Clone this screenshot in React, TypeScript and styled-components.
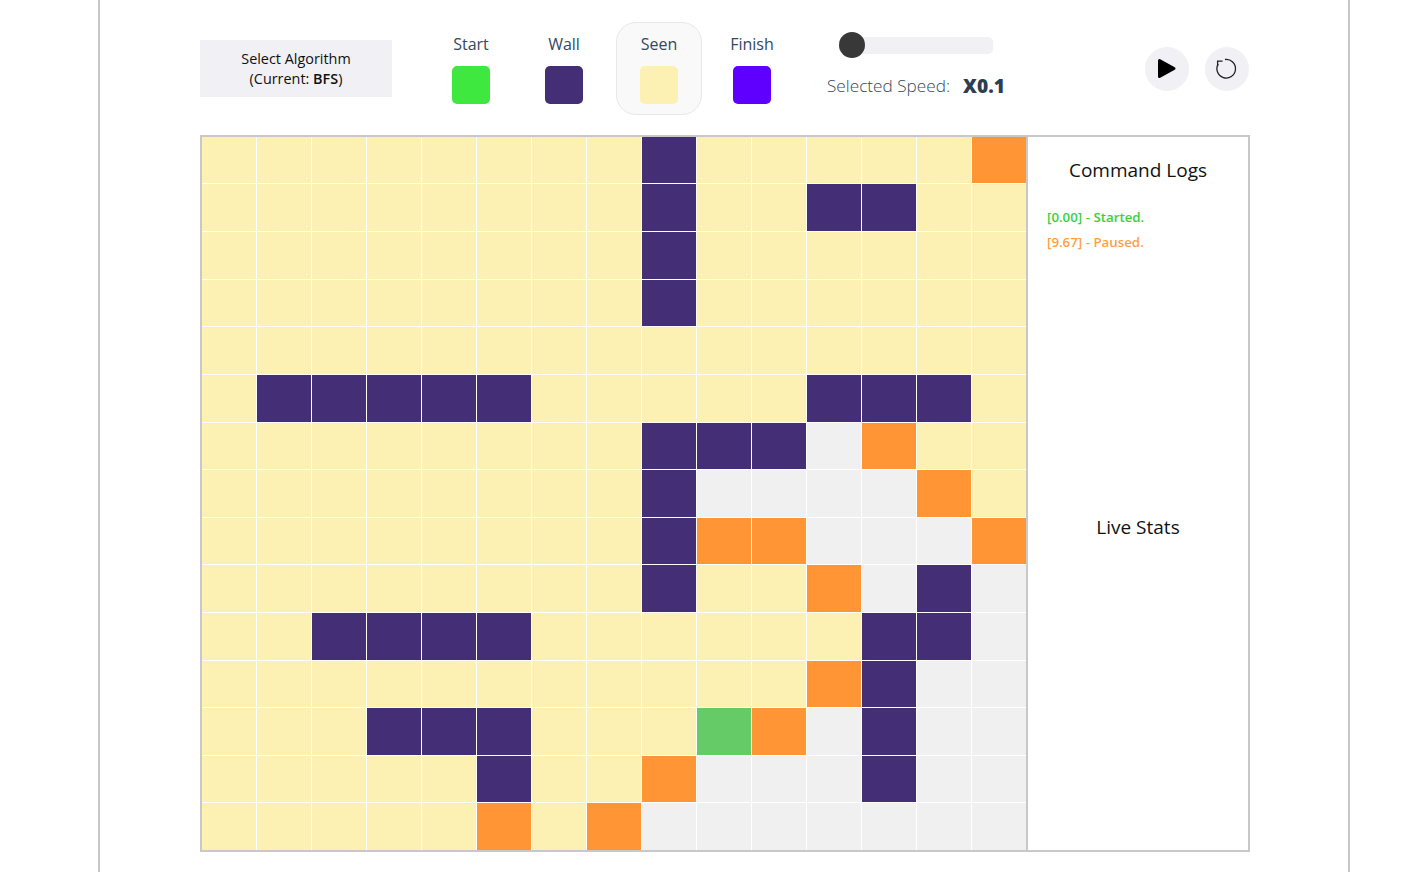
import React from 'react';
import styled, { createGlobalStyle } from 'styled-components';

const GlobalStyle = createGlobalStyle`
  html, body {
    margin: 0;
    padding: 0;
    background: #fff;
    font-family: 'Open Sans', sans-serif;
    overflow: hidden;
  }
`;

const colors = {
  start: '#3ee83e',
  wall: '#442f76',
  seen: '#fdf0b3',
  finish: '#5f00ff',
  frontier: '#ff9535',
  empty: '#f0f0f0',
  current: '#64cb66',
};

type CellKind = keyof typeof colors;

const kinds: Record<string, CellKind> = {
  Y: 'seen',
  W: 'wall',
  O: 'frontier',
  G: 'empty',
  S: 'current',
};

const board = [
  'YYYYYYYYWYYYYYO',
  'YYYYYYYYWYYWWYY',
  'YYYYYYYYWYYYYYY',
  'YYYYYYYYWYYYYYY',
  'YYYYYYYYYYYYYYY',
  'YWWWWWYYYYYWWWY',
  'YYYYYYYYWWWGOYY',
  'YYYYYYYYWGGGGOY',
  'YYYYYYYYWOOGGGO',
  'YYYYYYYYWYYOGWG',
  'YYWWWWYYYYYYWWG',
  'YYYYYYYYYYYOWGG',
  'YYYWWWYYYSOGWGG',
  'YYYYYWYYOGGGWGG',
  'YYYYYOYOGGGGGGG',
];

const legend: { label: string; color: string; active?: boolean }[] = [
  { label: 'Start', color: colors.start },
  { label: 'Wall', color: colors.wall },
  { label: 'Seen', color: colors.seen, active: true },
  { label: 'Finish', color: colors.finish },
];

const Page = styled.div`
  box-sizing: border-box;
  width: 1252px;
  height: 872px;
  margin-left: 98px;
  padding: 0 98px 0 100px;
  border-left: 2px solid #c8c8c8;
  border-right: 2px solid #c8c8c8;
`;

const Toolbar = styled.div`
  height: 135px;
  padding-top: 1px;
  box-sizing: border-box;
  display: flex;
  align-items: center;
`;

const AlgorithmButton = styled.button`
  width: 192px;
  height: 57px;
  padding: 2px 0 0;
  border: 0;
  background: #f0f0f5;
  color: #111;
  font-family: inherit;
  font-size: 14.4px;
  font-weight: 500;
  line-height: 20px;
  b {
    font-weight: 600;
  }
`;

const Legend = styled.div`
  display: flex;
  gap: 7px;
  margin-left: 36px;
`;

const LegendItem = styled.div<{ $active?: boolean }>`
  box-sizing: border-box;
  width: 86px;
  height: 93px;
  display: flex;
  flex-direction: column;
  align-items: center;
  padding-top: 10px;
  border: 1px solid ${(p) => (p.$active ? '#e8e8e8' : 'transparent')};
  border-radius: 20px;
  background: ${(p) => (p.$active ? '#f9f9f9' : 'transparent')};
  margin-left: ${(p) => (p.$active ? '2px' : '0')};
`;

const LegendLabel = styled.div`
  font-size: 16px;
  line-height: 22px;
  color: #34495e;
`;

const Swatch = styled.div<{ $color: string }>`
  width: 38.5px;
  height: 38px;
  margin-top: 11px;
  border-radius: 5px;
  background: ${(p) => p.$color};
`;

const SpeedControl = styled.div`
  width: 184px;
  margin-left: 32px;
  display: flex;
  flex-direction: column;
  margin-top: -1px;
`;

const SliderTrack = styled.div`
  position: relative;
  width: 154px;
  height: 17px;
  margin-left: 12px;
  border-radius: 5px;
  background: #f0f0f5;
`;

const SliderThumb = styled.div`
  position: absolute;
  left: 0;
  top: -5px;
  width: 26px;
  height: 26px;
  border-radius: 50%;
  background: #383838;
`;

const SpeedText = styled.div`
  margin-top: 20px;
  display: flex;
  align-items: center;
  gap: 13px;
  white-space: nowrap;
  font-size: 17.2px;
  line-height: 24px;
  font-weight: 300;
  color: #34495e;
`;

const SpeedValue = styled.span`
  font-size: 19.2px;
  font-weight: 800;
  color: #2c3e50;
`;

const Controls = styled.div`
  margin-left: auto;
  margin-right: 1px;
  margin-top: 1px;
  display: flex;
  gap: 16px;
`;

const RoundButton = styled.button`
  width: 44px;
  height: 44px;
  padding: 0;
  border: 0;
  border-radius: 50%;
  background: #f0f0f5;
  display: flex;
  align-items: center;
  justify-content: center;
`;

const Workspace = styled.div`
  box-sizing: border-box;
  width: 1050px;
  height: 717px;
  display: flex;
  border: 2px solid #c8c8c8;
`;

const Board = styled.div`
  width: 824px;
  flex: none;
  display: grid;
  grid-template-columns: repeat(15, 1fr);
  grid-template-rows: 46px 47.2px repeat(13, 1fr);
  gap: 1px;
  background: #fff;
`;

const Cell = styled.div<{ $kind: CellKind }>`
  background: ${(p) => colors[p.$kind]};
`;

const SidePanel = styled.div`
  flex: 1;
  display: flex;
  flex-direction: column;
  border-left: 2px solid #c8c8c8;
`;

const PanelSection = styled.section`
  flex: 1;
  padding: 20px 19px 0;
`;

const PanelTitle = styled.h2`
  margin: 0;
  font-size: 19px;
  line-height: 26px;
  font-weight: 400;
  text-align: center;
  color: #111;
`;

const LogList = styled.div`
  margin-top: 22px;
`;

const LogLine = styled.div<{ $color: string }>`
  font-size: 13.3px;
  line-height: 25px;
  font-weight: 600;
  color: ${(p) => p.$color};
`;

function PlayIcon() {
  return (
    <svg width="22" height="22" viewBox="0 0 22 22">
      <path
        d="M3.5 2.5 L18 10.5 L3.5 18.5 Z"
        fill="#000"
        stroke="#000"
        strokeWidth="3"
        strokeLinejoin="round"
      />
    </svg>
  );
}

function ResetIcon() {
  return (
    <svg width="24" height="24" viewBox="0 0 24 24" fill="none" stroke="#222" strokeWidth="1.3">
      <path d="M10 2.5 A9.3 9.3 0 1 1 3.2 7" />
      <path d="M7.6 4.2 L2.6 4.2 L2.6 9.2" />
    </svg>
  );
}

export default function App() {
  return (
    <>
      <GlobalStyle />
      <Page>
        <Toolbar>
          <AlgorithmButton>
            Select Algorithm
            <br />
            (Current: <b>BFS</b>)
          </AlgorithmButton>
          <Legend>
            {legend.map((item) => (
              <LegendItem key={item.label} $active={item.active}>
                <LegendLabel>{item.label}</LegendLabel>
                <Swatch $color={item.color} />
              </LegendItem>
            ))}
          </Legend>
          <SpeedControl>
            <SliderTrack>
              <SliderThumb />
            </SliderTrack>
            <SpeedText>
              Selected Speed: <SpeedValue>X0.1</SpeedValue>
            </SpeedText>
          </SpeedControl>
          <Controls>
            <RoundButton>
              <PlayIcon />
            </RoundButton>
            <RoundButton>
              <ResetIcon />
            </RoundButton>
          </Controls>
        </Toolbar>
        <Workspace>
          <Board>
            {board.flatMap((row, r) =>
              row.split('').map((c, i) => <Cell key={`${r}-${i}`} $kind={kinds[c]} />),
            )}
          </Board>
          <SidePanel>
            <PanelSection>
              <PanelTitle>Command Logs</PanelTitle>
              <LogList>
                <LogLine $color="#3ccf3c">[0.00] - Started.</LogLine>
                <LogLine $color="#ff9f45">[9.67] - Paused.</LogLine>
              </LogList>
            </PanelSection>
            <PanelSection>
              <PanelTitle>Live Stats</PanelTitle>
            </PanelSection>
          </SidePanel>
        </Workspace>
      </Page>
    </>
  );
}
